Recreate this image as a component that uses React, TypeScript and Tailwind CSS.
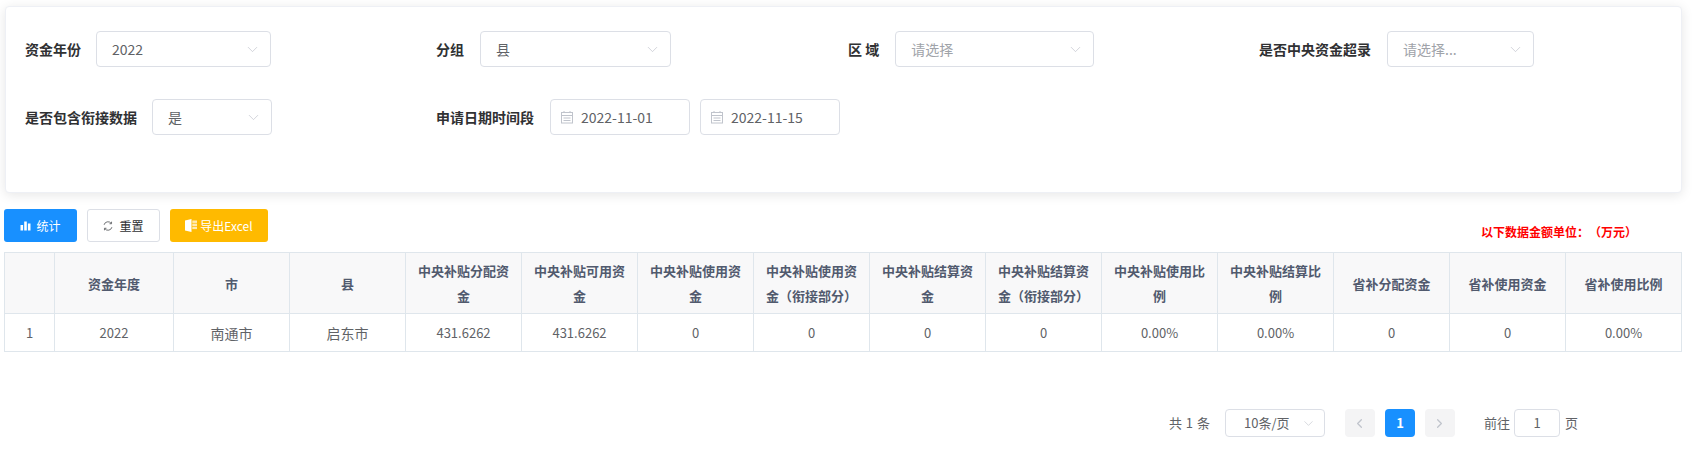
import { ChevronDown, ChevronLeft, ChevronRight } from "lucide-react";

const headers = [
  "",
  "资金年度",
  "市",
  "县",
  "中央补贴分配资金",
  "中央补贴可用资金",
  "中央补贴使用资金",
  "中央补贴使用资金（衔接部分）",
  "中央补贴结算资金",
  "中央补贴结算资金（衔接部分）",
  "中央补贴使用比例",
  "中央补贴结算比例",
  "省补分配资金",
  "省补使用资金",
  "省补使用比例",
];

const row = ["1", "2022", "南通市", "启东市", "431.6262", "431.6262", "0", "0", "0", "0", "0.00%", "0.00%", "0", "0", "0.00%"];

function Select({ value, placeholder, className }: { value?: string; placeholder?: string; className: string }) {
  return (
    <div className={`flex h-9 items-center justify-between rounded border border-[#dcdfe6] bg-white pl-[15px] pr-[9px] text-sm ${className}`}>
      <span className={value ? "text-[#606266]" : "text-[#a0a3a9]"}>{value ?? placeholder}</span>
      <ChevronDown size={17} strokeWidth={1} className="text-[#c0c4cc]" />
    </div>
  );
}

function DateBox({ value }: { value: string }) {
  return (
    <div className="flex h-9 w-[140px] items-center rounded border border-[#dcdfe6] bg-white pl-[9px] text-sm text-[#606266]">
      <svg width="14" height="14" viewBox="0 0 14 14" fill="none" stroke="#c0c4cc" strokeWidth="1" className="mr-[7px]">
        <rect x="1.5" y="2.5" width="11" height="10.5" />
        <path d="M1.5 5.5h11M4 1v2M10 1v2M3.5 8h7M3.5 10.5h7" />
      </svg>
      {value}
    </div>
  );
}

function Label({ children }: { children: React.ReactNode }) {
  return <span className="whitespace-nowrap text-sm font-bold text-[#303133]">{children}</span>;
}

export default function App() {
  return (
    <div className="min-h-[452px] bg-white pl-[5px] pr-[11px] pt-[6px] font-['Noto_Sans_CJK_SC','Noto_Sans',sans-serif]">
      <div className="h-[187px] rounded border border-[#eef0f5] bg-white pl-[19px] pt-6 shadow-[0_2px_12px_rgba(0,0,0,0.1)]">
        <div className="grid grid-cols-[411px_412px_411px_1fr] gap-y-8">
          <div className="flex items-center gap-[15px]">
            <Label>资金年份</Label>
            <Select value="2022" className="w-[175px]" />
          </div>
          <div className="flex items-center gap-4">
            <Label>分组</Label>
            <Select value="县" className="w-[191px]" />
          </div>
          <div className="flex items-center gap-4">
            <Label>区 域</Label>
            <Select placeholder="请选择" className="w-[199px]" />
          </div>
          <div className="flex items-center gap-4">
            <Label>是否中央资金超录</Label>
            <Select placeholder="请选择..." className="w-[147px]" />
          </div>
          <div className="flex items-center gap-[15px]">
            <Label>是否包含衔接数据</Label>
            <Select value="是" className="w-[120px]" />
          </div>
          <div className="col-span-2 flex items-center gap-4">
            <Label>申请日期时间段</Label>
            <div className="flex gap-[10px]">
              <DateBox value="2022-11-01" />
              <DateBox value="2022-11-15" />
            </div>
          </div>
        </div>
      </div>

      <div className="mt-4 flex items-end justify-between">
        <div className="ml-[-1px] flex">
          <button className="flex h-[33px] w-[73px] items-center justify-center gap-[5px] rounded-[3px] bg-[#1890ff] text-xs text-white">
            <svg width="11" height="11" viewBox="0 0 11 11" fill="white">
              <rect x="0.5" y="5" width="2.6" height="5.5" />
              <rect x="4.2" y="1.5" width="2.6" height="9" />
              <rect x="7.9" y="3.5" width="2.6" height="7" />
            </svg>
            统计
          </button>
          <button className="ml-[10px] flex h-[33px] w-[73px] items-center justify-center gap-[6px] rounded-[3px] border border-[#dcdfe6] bg-white text-xs text-[#303133]">
            <svg width="10" height="10" viewBox="0 0 11 11" fill="none" stroke="#606266" strokeWidth="1">
              <path d="M1.2 4.2A4.4 4.4 0 0 1 9 2.6M9.8 6.8A4.4 4.4 0 0 1 2 8.4" />
              <path d="M9.4 0.8v2.2H7.2M1.6 10.2V8h2.2" />
            </svg>
            重置
          </button>
          <button className="ml-[10px] flex h-[33px] w-[98px] items-center justify-center gap-[3px] rounded-[3px] bg-[#ffba00] text-xs text-white">
            <svg width="12" height="13" viewBox="0 0 12 13" fill="white">
              <path d="M0 1.5 6.5 0v13L0 11.5z" />
              <rect x="7.3" y="1.5" width="4.7" height="2.4" opacity="0.7" />
              <rect x="7.3" y="4.6" width="4.7" height="2.4" opacity="0.7" />
              <rect x="7.3" y="7.7" width="4.7" height="2.4" opacity="0.7" />
            </svg>
            导出Excel
          </button>
        </div>
        <span className="mr-[45px] text-xs font-bold leading-5 text-[#ff0000]">
          以下数据金额单位：
          <span className="ml-[6px]">（万元）</span>
        </span>
      </div>

      <table className="ml-[-1px] mt-[10px] w-[1678px] table-fixed border-collapse text-[13px]">
        <colgroup>
          <col className="w-[50px]" />
          <col className="w-[119px]" />
          <col span={13} className="w-[116px]" />
        </colgroup>
        <thead>
          <tr className="h-[61px]">
            {headers.map((h, i) => (
              <th key={i} className="border border-[#dfe6ec] bg-[#f8f8f9] px-[8px] text-center text-[13px] font-bold leading-[25px] text-[#515a6e]">
                {h}
              </th>
            ))}
          </tr>
        </thead>
        <tbody>
          <tr className="h-[38px]">
            {row.map((c, i) => (
              <td key={i} className={`border border-[#dfe6ec] text-center text-[#606266] ${i === 2 || i === 3 ? "text-sm" : ""}`}>
                {c}
              </td>
            ))}
          </tr>
        </tbody>
      </table>

      <div className="mt-[57px] flex h-7 items-center justify-end pr-[104px] text-[13px] text-[#606266]">
        <span className="[word-spacing:1px]">共 1 条</span>
        <div className="ml-[15px] flex h-7 w-[100px] items-center justify-between rounded border border-[#dcdfe6] pl-[18px] pr-[8px]">
          <span>10条/页</span>
          <ChevronDown size={15} strokeWidth={1} className="text-[#c0c4cc]" />
        </div>
        <button className="ml-[20px] flex h-7 w-[30px] items-center justify-center rounded-sm bg-[#f4f4f5] text-[#c0c4cc]">
          <ChevronLeft size={15} strokeWidth={2} />
        </button>
        <button className="ml-[10px] flex h-7 w-[30px] items-center justify-center rounded-sm bg-[#1890ff] font-bold text-white">1</button>
        <button className="ml-[10px] flex h-7 w-[30px] items-center justify-center rounded-sm bg-[#f4f4f5] text-[#c0c4cc]">
          <ChevronRight size={15} strokeWidth={2} />
        </button>
        <span className="ml-[29px]">前往</span>
        <div className="ml-1 flex h-7 w-[46px] items-center justify-center rounded border border-[#dcdfe6]">1</div>
        <span className="ml-[5px]">页</span>
      </div>
    </div>
  );
}
